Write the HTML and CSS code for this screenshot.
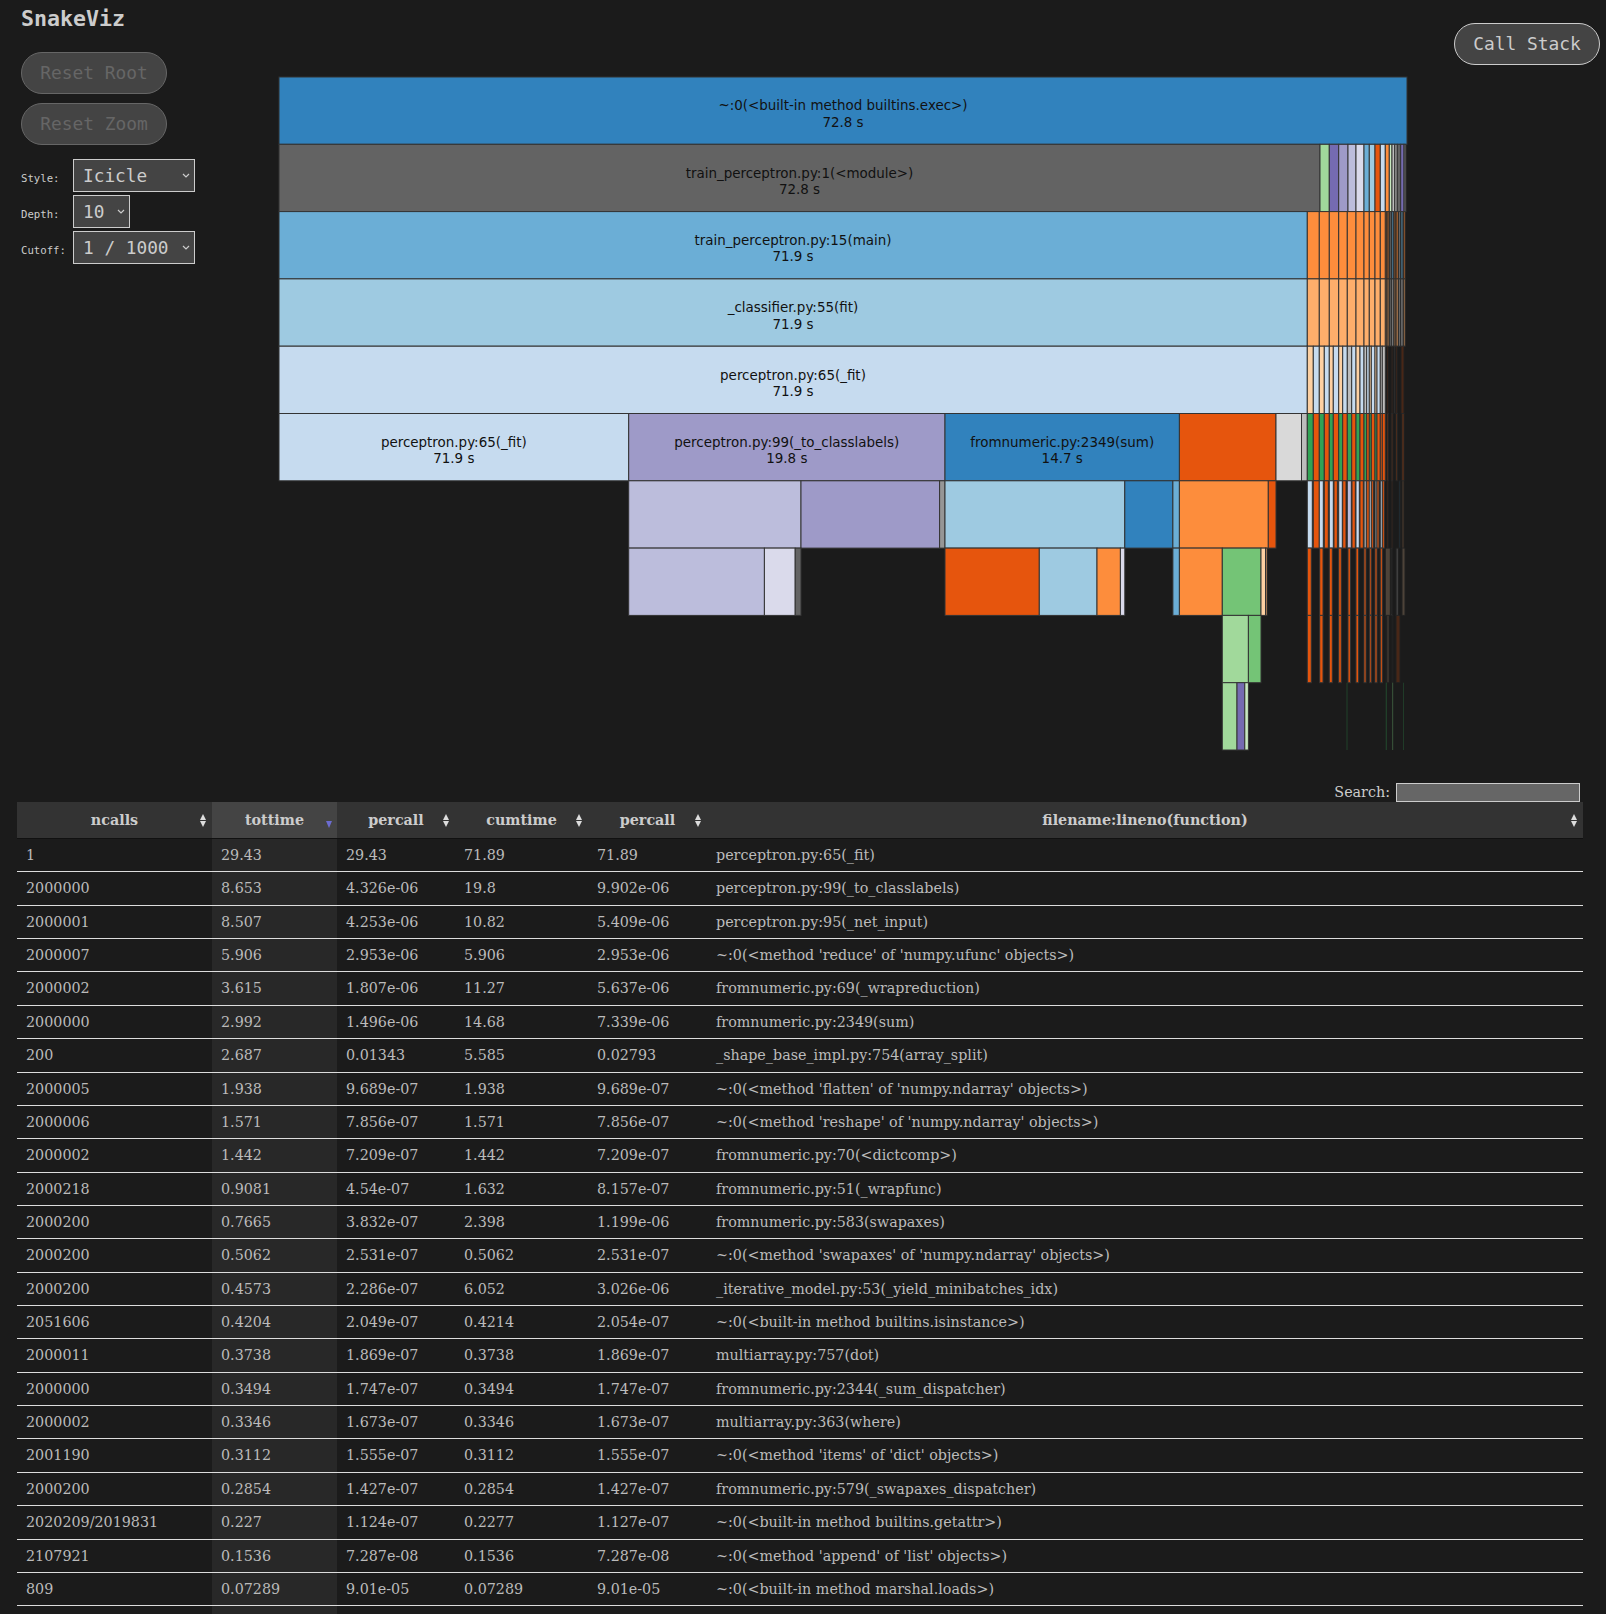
FILE: index.html
```html
<!DOCTYPE html>
<html lang="en">
<head>
    <meta charset="UTF-8">
    <title>SnakeViz</title>
    <link rel="stylesheet" href="styles.css">
</head>
<body>
    <div class="top">
        <div class="sidebar">
            <div class="title">SnakeViz</div>
            <button class="pill" disabled>Reset Root</button>
            <button class="pill" disabled>Reset Zoom</button>
            <div class="option">
                <label for="style-select">Style:</label>
                <select id="style-select" class="wide">
                    <option>Icicle</option>
                    <option>Sunburst</option>
                </select>
            </div>
            <div class="option">
                <label for="depth-select">Depth:</label>
                <select id="depth-select">
                    <option>10</option>
                    <option>20</option>
                </select>
            </div>
            <div class="option">
                <label for="cutoff-select">Cutoff:</label>
                <select id="cutoff-select" class="wide">
                    <option>1 / 1000</option>
                    <option>1 / 100</option>
                </select>
            </div>
        </div>

        <svg class="chart" width="1128" height="673" viewBox="279 77 1128 673">
            <g transform="translate(0,77)">
                <rect class="b1" x="279" width="1128"/>
                <text x="843" y="33">~:0(&lt;built-in method builtins.exec&gt;)</text>
                <text x="843" y="49.5">72.8 s</text>
            </g>
            <g transform="translate(0,144.3)">
                <rect class="k1" x="279" width="1041"/>
                <rect class="g3" x="1320" width="9.3"/>
                <rect class="p1" x="1329.3" width="9.4"/>
                <rect class="p2" x="1338.7" width="9.3"/>
                <rect class="p3" x="1348" width="8"/>
                <rect class="p4" x="1356" width="8"/>
                <rect class="b2" x="1364" width="5.3"/>
                <rect class="b3" x="1369.3" width="5.7"/>
                <rect class="o1" x="1375" width="5.3"/>
                <rect class="b4" x="1380.3" width="5"/>
                <rect class="o2" x="1385.3" width="4"/>
                <rect class="g4" x="1389.3" width="2.7"/>
                <rect class="k3" x="1392" width="2.7"/>
                <rect class="k2" x="1394.7" width="2.6"/>
                <rect class="k1" x="1397.3" width="3.4"/>
                <rect class="p1" x="1400.7" width="3.3"/>
                <rect class="k1" x="1404" width="2"/>
                <text x="799.5" y="33.7">train_perceptron.py:1(&lt;module&gt;)</text>
                <text x="799.5" y="50">72.8 s</text>
            </g>
            <g transform="translate(0,211.6)">
                <rect class="b2" x="279" width="1028.3"/>
                <rect class="o2" x="1307.3" width="12"/>
                <rect class="o2" x="1319.3" width="10"/>
                <rect class="o2" x="1329.3" width="9.4"/>
                <rect class="o2" x="1338.7" width="8.6"/>
                <rect class="o2" x="1347.3" width="8.7"/>
                <rect class="o2" x="1356" width="8"/>
                <rect class="o2" x="1364" width="5.3"/>
                <rect class="o2" x="1369.3" width="5.7"/>
                <rect class="o2" x="1375" width="5.3"/>
                <rect class="o2" x="1380.3" width="5"/>
                <g class="soft">
                    <rect class="o2" x="1385.3" width="1.7"/>
                    <rect class="o2" x="1387" width="2.3"/>
                    <rect class="k3" x="1389.3" width="2"/>
                    <rect class="b2" x="1391.3" width="2.7"/>
                    <rect class="o2" x="1394" width="2"/>
                    <rect class="o2" x="1396" width="2.7"/>
                    <rect class="k3" x="1398.7" width="2"/>
                    <rect class="b2" x="1400.7" width="2.6"/>
                    <rect class="o2" x="1403.3" width="2"/>
                </g>
                <text x="793" y="33">train_perceptron.py:15(main)</text>
                <text x="793" y="49.5">71.9 s</text>
            </g>
            <g transform="translate(0,278.9)">
                <rect class="b3" x="279" width="1028.3"/>
                <rect class="o3" x="1307.3" width="12"/>
                <rect class="o3" x="1319.3" width="10"/>
                <rect class="o3" x="1329.3" width="9.4"/>
                <rect class="o3" x="1338.7" width="8.6"/>
                <rect class="o3" x="1347.3" width="8.7"/>
                <rect class="o3" x="1356" width="8"/>
                <rect class="o3" x="1364" width="5.3"/>
                <rect class="o3" x="1369.3" width="5.7"/>
                <rect class="o3" x="1375" width="5.3"/>
                <rect class="o3" x="1380.3" width="5"/>
                <g class="soft">
                    <rect class="o3" x="1385.3" width="1.7"/>
                    <rect class="o3" x="1387" width="2.3"/>
                    <rect class="k3" x="1389.3" width="2"/>
                    <rect class="k3" x="1391.3" width="2.7"/>
                    <rect class="o3" x="1394" width="2"/>
                    <rect class="o3" x="1396" width="2.7"/>
                    <rect class="k3" x="1398.7" width="2"/>
                    <rect class="k3" x="1400.7" width="2.6"/>
                    <rect class="o3" x="1403.3" width="2"/>
                </g>
                <text x="793" y="33">_classifier.py:55(fit)</text>
                <text x="793" y="50">71.9 s</text>
            </g>
            <g transform="translate(0,346.2)">
                <rect class="b4" x="279" width="1028.3"/>
                <rect class="o4" x="1307.3" width="6"/>
                <rect class="b4" x="1313.3" width="6"/>
                <rect class="o4" x="1319.3" width="5"/>
                <rect class="b4" x="1324.3" width="5"/>
                <rect class="o4" x="1329.3" width="4"/>
                <rect class="b4" x="1333.3" width="5.4"/>
                <rect class="o4" x="1338.7" width="4"/>
                <rect class="b4" x="1342.7" width="4.6"/>
                <rect class="k3" x="1347.3" width="4.4"/>
                <rect class="b4" x="1351.7" width="4.3"/>
                <rect class="o4" x="1356" width="4"/>
                <rect class="b4" x="1360" width="4"/>
                <rect class="k3" x="1364" width="2.7"/>
                <rect class="b4" x="1366.7" width="2.6"/>
                <rect class="o4" x="1369.3" width="2"/>
                <rect class="b4" x="1371.3" width="3.7"/>
                <rect class="o4" x="1375" width="2"/>
                <rect class="b4" x="1377" width="3.3"/>
                <rect class="k3" x="1380.3" width="2"/>
                <rect class="k3" x="1382.3" width="3"/>
                <g class="faint">
                    <rect class="o1" x="1387" width="1.5"/>
                    <rect class="o1" x="1391.3" width="1.5"/>
                    <rect class="k2" x="1394" width="1.5"/>
                    <rect class="o1" x="1396" width="1.5"/>
                    <rect class="o1" x="1401" width="3"/>
                </g>
                <text x="793" y="33.4">perceptron.py:65(_fit)</text>
                <text x="793" y="50">71.9 s</text>
            </g>
            <g transform="translate(0,413.5)">
                <rect class="b4" x="279" width="349.7"/>
                <rect class="p2" x="628.7" width="316.3"/>
                <rect class="b1" x="945" width="234.4"/>
                <rect class="o1" x="1179.4" width="96.6"/>
                <rect class="k4" x="1276" width="25.5"/>
                <rect class="k3" x="1301.5" width="5.8"/>
                <rect class="g1" x="1307.3" width="6"/>
                <rect class="o1" x="1313.3" width="6"/>
                <rect class="g1" x="1319.3" width="5"/>
                <rect class="o1" x="1324.3" width="5"/>
                <rect class="g1" x="1329.3" width="4"/>
                <rect class="o1" x="1333.3" width="5.4"/>
                <rect class="g1" x="1338.7" width="4"/>
                <rect class="o1" x="1342.7" width="4.6"/>
                <rect class="g1" x="1347.3" width="4.4"/>
                <rect class="o1" x="1351.7" width="4.3"/>
                <rect class="g1" x="1356" width="4"/>
                <rect class="o1" x="1360" width="4"/>
                <rect class="g1" x="1364" width="2.7"/>
                <rect class="o1" x="1366.7" width="2.6"/>
                <rect class="g1" x="1369.3" width="2"/>
                <rect class="o1" x="1371.3" width="3.7"/>
                <rect class="g1" x="1375" width="2"/>
                <rect class="o1" x="1377" width="3.3"/>
                <rect class="o1" x="1380.3" width="2"/>
                <rect class="o1" x="1382.3" width="3"/>
                <g class="dim">
                    <rect class="o1" x="1387" width="1.5"/>
                    <rect class="o1" x="1391.3" width="1.5"/>
                    <rect class="o1" x="1396" width="1.5"/>
                    <rect class="o1" x="1402" width="2"/>
                </g>
                <text x="453.8" y="33">perceptron.py:65(_fit)</text>
                <text x="453.8" y="49.5">71.9 s</text>
                <text x="786.8" y="33">perceptron.py:99(_to_classlabels)</text>
                <text x="786.8" y="49.5">19.8 s</text>
                <text x="1062.2" y="33">fromnumeric.py:2349(sum)</text>
                <text x="1062.2" y="49.5">14.7 s</text>
            </g>
            <g transform="translate(0,480.8)">
                <rect class="p3" x="628.7" width="172.3"/>
                <rect class="p2" x="801" width="138.6"/>
                <rect class="k2" x="939.6" width="5.4"/>
                <rect class="b3" x="945" width="179.8"/>
                <rect class="b1" x="1124.8" width="48.1"/>
                <rect class="b2" x="1172.9" width="6.5"/>
                <rect class="o2" x="1179.4" width="88.9"/>
                <rect class="o1" x="1268.3" width="7.7"/>
                <rect class="b4" x="1307.3" width="5"/>
                <rect class="o1" x="1313.3" width="6"/>
                <rect class="b4" x="1319.3" width="4"/>
                <rect class="o1" x="1324.3" width="4"/>
                <rect class="b4" x="1329.3" width="4"/>
                <rect class="o1" x="1334" width="3.4"/>
                <rect class="b4" x="1338.7" width="3.6"/>
                <rect class="o1" x="1342.7" width="3.3"/>
                <rect class="p3" x="1347.3" width="4"/>
                <rect class="o1" x="1352" width="3.3"/>
                <rect class="b4" x="1356" width="3.3"/>
                <rect class="o1" x="1360" width="3.3"/>
                <rect class="k2" x="1364" width="2.7"/>
                <rect class="o1" x="1366.7" width="2.6"/>
                <rect class="b4" x="1369.3" width="2"/>
                <rect class="o1" x="1371.3" width="2"/>
                <rect class="k2" x="1375" width="2"/>
                <rect class="o1" x="1377" width="2"/>
                <rect class="b4" x="1380.3" width="2"/>
                <rect class="o1" x="1382.3" width="2"/>
                <g class="faint">
                    <rect class="o1" x="1387" width="1.5"/>
                    <rect class="o1" x="1391.3" width="1.5"/>
                    <rect class="b1" x="1399" width="1.5"/>
                    <rect class="o3" x="1402" width="2"/>
                </g>
            </g>
            <g transform="translate(0,548.1)">
                <rect class="p3" x="628.7" width="135.7"/>
                <rect class="p4" x="764.4" width="30.8"/>
                <rect class="k1" x="795.2" width="5.8"/>
                <rect class="o1" x="945" width="94.3"/>
                <rect class="b3" x="1039.3" width="57.7"/>
                <rect class="o2" x="1097" width="23.4"/>
                <rect class="p4" x="1120.4" width="4.4"/>
                <rect class="b2" x="1172.9" width="6.5"/>
                <rect class="o2" x="1179.4" width="42.9"/>
                <rect class="g2" x="1222.3" width="38.7"/>
                <rect class="o4" x="1261" width="4.5"/>
                <rect class="o3" x="1265.5" width="1.5"/>
                <rect class="o1" x="1307.3" width="4"/>
                <rect class="o1" x="1319.7" width="3.3"/>
                <rect class="o1" x="1329.3" width="3"/>
                <rect class="o1" x="1338.7" width="2.6"/>
                <rect class="o1" x="1348" width="2.4"/>
                <rect class="o1" x="1356" width="2.6"/>
                <rect class="o1" x="1364" width="2"/>
                <rect class="o1" x="1369.7" width="1.6"/>
                <rect class="o1" x="1375" width="2"/>
                <rect class="o1" x="1380.3" width="2"/>
                <g class="faint">
                    <rect class="o4" x="1385.3" width="5"/>
                    <rect class="k3" x="1391.3" width="1.2"/>
                    <rect class="k3" x="1396" width="2.5"/>
                    <rect class="o4" x="1402" width="3"/>
                </g>
            </g>
            <g transform="translate(0,615.4)">
                <rect class="g3" x="1222.3" width="26.1"/>
                <rect class="g2" x="1248.4" width="12.6"/>
                <rect class="o1" x="1307.3" width="4"/>
                <rect class="o1" x="1319.7" width="3.3"/>
                <rect class="o1" x="1329.3" width="3"/>
                <rect class="o1" x="1338.7" width="2.6"/>
                <rect class="o1" x="1348" width="2.4"/>
                <rect class="o1" x="1356" width="2.6"/>
                <rect class="o1" x="1364" width="2"/>
                <rect class="o1" x="1369.7" width="1.6"/>
                <rect class="o1" x="1375" width="2"/>
                <rect class="o1" x="1380.3" width="2"/>
                <g class="faint">
                    <rect class="g1" x="1386" width="1"/>
                    <rect class="o4" x="1387" width="2"/>
                    <rect class="g1" x="1392" width="1"/>
                    <rect class="o1" x="1396" width="4"/>
                </g>
            </g>
            <g transform="translate(0,682.7)">
                <rect class="g3" x="1222.3" width="14.7"/>
                <rect class="p1" x="1237" width="7.8"/>
                <rect class="g4" x="1244.8" width="3.6"/>
                <g class="hair">
                    <rect class="g1" x="1346.5" width="1"/>
                    <rect class="g1" x="1385.7" width="1.2"/>
                    <rect class="g2" x="1392" width="1.2"/>
                    <rect class="g1" x="1403" width="0.8"/>
                </g>
            </g>
        </svg>

        <button class="pill stack">Call Stack</button>
    </div>

    <div class="search">
        <label for="search-input">Search:</label>
        <input id="search-input" type="text">
    </div>

    <table class="stats">
        <colgroup>
            <col class="col-ncalls">
            <col class="col-tottime">
            <col class="col-percall">
            <col class="col-cumtime">
            <col class="col-percall2">
            <col>
        </colgroup>
        <thead>
            <tr>
                <th class="sortable">ncalls</th>
                <th class="sorted">tottime</th>
                <th class="sortable">percall</th>
                <th class="sortable">cumtime</th>
                <th class="sortable">percall</th>
                <th class="sortable">filename:lineno(function)</th>
            </tr>
        </thead>
        <tbody>
            <tr><td>1</td><td>29.43</td><td>29.43</td><td>71.89</td><td>71.89</td><td>perceptron.py:65(_fit)</td></tr>
            <tr><td>2000000</td><td>8.653</td><td>4.326e-06</td><td>19.8</td><td>9.902e-06</td><td>perceptron.py:99(_to_classlabels)</td></tr>
            <tr><td>2000001</td><td>8.507</td><td>4.253e-06</td><td>10.82</td><td>5.409e-06</td><td>perceptron.py:95(_net_input)</td></tr>
            <tr><td>2000007</td><td>5.906</td><td>2.953e-06</td><td>5.906</td><td>2.953e-06</td><td>~:0(&lt;method 'reduce' of 'numpy.ufunc' objects&gt;)</td></tr>
            <tr><td>2000002</td><td>3.615</td><td>1.807e-06</td><td>11.27</td><td>5.637e-06</td><td>fromnumeric.py:69(_wrapreduction)</td></tr>
            <tr><td>2000000</td><td>2.992</td><td>1.496e-06</td><td>14.68</td><td>7.339e-06</td><td>fromnumeric.py:2349(sum)</td></tr>
            <tr><td>200</td><td>2.687</td><td>0.01343</td><td>5.585</td><td>0.02793</td><td>_shape_base_impl.py:754(array_split)</td></tr>
            <tr><td>2000005</td><td>1.938</td><td>9.689e-07</td><td>1.938</td><td>9.689e-07</td><td>~:0(&lt;method 'flatten' of 'numpy.ndarray' objects&gt;)</td></tr>
            <tr><td>2000006</td><td>1.571</td><td>7.856e-07</td><td>1.571</td><td>7.856e-07</td><td>~:0(&lt;method 'reshape' of 'numpy.ndarray' objects&gt;)</td></tr>
            <tr><td>2000002</td><td>1.442</td><td>7.209e-07</td><td>1.442</td><td>7.209e-07</td><td>fromnumeric.py:70(&lt;dictcomp&gt;)</td></tr>
            <tr><td>2000218</td><td>0.9081</td><td>4.54e-07</td><td>1.632</td><td>8.157e-07</td><td>fromnumeric.py:51(_wrapfunc)</td></tr>
            <tr><td>2000200</td><td>0.7665</td><td>3.832e-07</td><td>2.398</td><td>1.199e-06</td><td>fromnumeric.py:583(swapaxes)</td></tr>
            <tr><td>2000200</td><td>0.5062</td><td>2.531e-07</td><td>0.5062</td><td>2.531e-07</td><td>~:0(&lt;method 'swapaxes' of 'numpy.ndarray' objects&gt;)</td></tr>
            <tr><td>2000200</td><td>0.4573</td><td>2.286e-07</td><td>6.052</td><td>3.026e-06</td><td>_iterative_model.py:53(_yield_minibatches_idx)</td></tr>
            <tr><td>2051606</td><td>0.4204</td><td>2.049e-07</td><td>0.4214</td><td>2.054e-07</td><td>~:0(&lt;built-in method builtins.isinstance&gt;)</td></tr>
            <tr><td>2000011</td><td>0.3738</td><td>1.869e-07</td><td>0.3738</td><td>1.869e-07</td><td>multiarray.py:757(dot)</td></tr>
            <tr><td>2000000</td><td>0.3494</td><td>1.747e-07</td><td>0.3494</td><td>1.747e-07</td><td>fromnumeric.py:2344(_sum_dispatcher)</td></tr>
            <tr><td>2000002</td><td>0.3346</td><td>1.673e-07</td><td>0.3346</td><td>1.673e-07</td><td>multiarray.py:363(where)</td></tr>
            <tr><td>2001190</td><td>0.3112</td><td>1.555e-07</td><td>0.3112</td><td>1.555e-07</td><td>~:0(&lt;method 'items' of 'dict' objects&gt;)</td></tr>
            <tr><td>2000200</td><td>0.2854</td><td>1.427e-07</td><td>0.2854</td><td>1.427e-07</td><td>fromnumeric.py:579(_swapaxes_dispatcher)</td></tr>
            <tr><td>2020209/2019831</td><td>0.227</td><td>1.124e-07</td><td>0.2277</td><td>1.127e-07</td><td>~:0(&lt;built-in method builtins.getattr&gt;)</td></tr>
            <tr><td>2107921</td><td>0.1536</td><td>7.287e-08</td><td>0.1536</td><td>7.287e-08</td><td>~:0(&lt;method 'append' of 'list' objects&gt;)</td></tr>
            <tr><td>809</td><td>0.07289</td><td>9.01e-05</td><td>0.07289</td><td>9.01e-05</td><td>~:0(&lt;built-in method marshal.loads&gt;)</td></tr>
            <tr><td>&nbsp;</td><td></td><td></td><td></td><td></td><td></td></tr>
        </tbody>
    </table>
</body>
</html>
```

FILE: styles.css
```css
html, body {
    height: 100vh;
    overflow: hidden;
}
body {
    margin: 0;
    background-color: #1b1b1b;
    color: #ccc;
    font-family: "DejaVu Serif", serif;
}

/* Top area: controls, icicle chart, call stack button */
.top {
    display: flex;
    align-items: flex-start;
    height: 783px;
}
.sidebar {
    width: 258px;
    padding: 6px 0 0 21px;
    font-family: "DejaVu Sans Mono", monospace;
}
.title {
    height: 25px;
    font-size: 21.6px;
    font-weight: bold;
    margin-bottom: 21px;
}
.pill {
    display: block;
    box-sizing: border-box;
    height: 42px;
    width: 146px;
    padding: 0 0 2px;
    margin-bottom: 9px;
    background-color: #444;
    color: #ccc;
    border: 1px solid #ccc;
    border-radius: 21px;
    font-family: "DejaVu Sans Mono", monospace;
    font-size: 17.9px;
}
.pill:disabled {
    color: #666;
    border-color: #666;
}
.stack {
    margin: 23px 6px 0 auto;
}
.option {
    display: flex;
    align-items: baseline;
    margin-bottom: 3px;
}
.option label {
    width: 52px;
    font-size: 10.67px;
}
.pill + .option {
    margin-top: 14px;
}
.option select {
    appearance: none;
    box-sizing: border-box;
    width: 57px;
    height: 33px;
    padding: 0 0 0 9px;
    background-color: #444;
    background-image: url("data:image/svg+xml,%3Csvg xmlns='http://www.w3.org/2000/svg' width='8' height='6'%3E%3Cpath d='M1 1l3 3 3-3' fill='none' stroke='%23ccc' stroke-width='1.2'/%3E%3C/svg%3E");
    background-repeat: no-repeat;
    background-position: right 4px center;
    color: #ccc;
    border: 1px solid #ccc;
    border-radius: 0;
    font-family: "DejaVu Sans Mono", monospace;
    font-size: 17.78px;
}
.option select.wide {
    width: 122px;
}

/* Icicle chart */
.chart {
    margin-top: 77px;
    overflow: visible;
    font-family: "DejaVu Sans", sans-serif;
    font-size: 13.44px;
}
.chart rect {
    height: 67.3px;
    stroke: #333;
    stroke-width: 1;
}
.chart text {
    fill: #111;
    text-anchor: middle;
}
.chart .soft {
    opacity: 0.55;
}
.chart .dim {
    opacity: 0.4;
}
.chart .faint {
    opacity: 0.22;
}
.chart .hair rect {
    stroke: none;
    opacity: 0.3;
}
.b1 { fill: #3182bd; }
.b2 { fill: #6baed6; }
.b3 { fill: #9ecae1; }
.b4 { fill: #c6dbef; }
.o1 { fill: #e6550d; }
.o2 { fill: #fd8d3c; }
.o3 { fill: #fdae6b; }
.o4 { fill: #fdd0a2; }
.g1 { fill: #31a354; }
.g2 { fill: #74c476; }
.g3 { fill: #a1d99b; }
.g4 { fill: #c7e9c0; }
.p1 { fill: #756bb1; }
.p2 { fill: #9e9ac8; }
.p3 { fill: #bcbddc; }
.p4 { fill: #dadaeb; }
.k1 { fill: #636363; }
.k2 { fill: #969696; }
.k3 { fill: #bdbdbd; }
.k4 { fill: #d9d9d9; }

/* Search box */
.search {
    display: flex;
    justify-content: flex-end;
    align-items: baseline;
    gap: 6px;
    height: 19px;
    padding-right: 26px;
    font-size: 14.3px;
}
.search input {
    box-sizing: border-box;
    width: 184px;
    height: 19px;
    padding: 0;
    background-color: #666;
    color: #ccc;
    border: 1px solid #ccc;
    border-radius: 0;
}

/* Stats table */
.stats {
    table-layout: fixed;
    border-collapse: separate;
    border-spacing: 0;
    width: 1566px;
    margin-left: 17px;
    font-size: 14.3px;
}
.col-ncalls { width: 195px; }
.col-tottime { width: 125px; }
.col-percall { width: 118px; }
.col-cumtime { width: 133px; }
.col-percall2 { width: 119px; }
.stats th {
    position: relative;
    height: 35px;
    padding: 0 10px 1px;
    background-color: #333;
    border-bottom: 1px solid #111;
    text-align: center;
}
.stats th.sorted {
    background-color: #444;
}
.stats td {
    padding: 8px 9px;
    line-height: 16.36px;
    color: #bbb;
    border-bottom: 1px solid #ddd;
    white-space: nowrap;
}
.stats td:nth-child(2) {
    background-color: #282828;
}

/* Sort arrows, they sit over the header cell */
.sortable::before,
.sortable::after,
.sorted::after {
    content: "";
    position: absolute;
    right: 6px;
    border-left: 3.5px solid transparent;
    border-right: 3.5px solid transparent;
}
.sortable::before {
    top: 12px;
    border-bottom: 6px solid #ddd;
}
.sortable::after {
    top: 19px;
    border-top: 6px solid #ddd;
}
.sorted::after {
    top: 19px;
    right: 5.5px;
    border-top: 7px solid #6c6cd0;
}
```
